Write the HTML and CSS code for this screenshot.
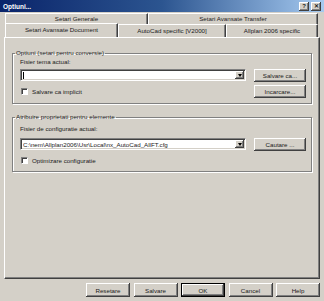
FILE: index.html
```html
<!DOCTYPE html>
<html lang="ro">
<head>
    <meta charset="UTF-8">
    <title>Optiuni...</title>
    <link rel="stylesheet" href="styles.css">
</head>
<body>
    <div class="dialog">
        <div class="titlebar">
            <span class="title">Optiuni...</span>
            <span class="tbtn">?</span>
            <span class="tbtn close">✕</span>
        </div>

        <div class="tabs">
            <div class="tabrow back">
                <div class="tab w143">Setari Generale</div>
                <div class="tab w170">Setari Avansate Transfer</div>
            </div>
            <div class="tabrow front">
                <div class="tab w113 active">Setari Avansate Document</div>
                <div class="tab w108">AutoCad specific [V2000]</div>
                <div class="tab w92">Allplan 2006 specific</div>
            </div>
        </div>

        <div class="panel">
            <fieldset class="group g1">
                <legend>Optiuni (setari pentru conversie)</legend>
                <div class="lbl">Fisier tema actual:</div>
                <div class="row">
                    <div class="combo"><span class="caret"></span><span class="drop"><i></i></span></div>
                    <button class="btn">Salvare ca...</button>
                </div>
                <div class="row r2">
                    <label class="check"><span class="box"></span>Salvare ca implicit</label>
                    <button class="btn">Incarcare...</button>
                </div>
            </fieldset>

            <fieldset class="group g2">
                <legend>Atribuire proprietati pentru elemente</legend>
                <div class="lbl">Fisier de configuratie actual:</div>
                <div class="row">
                    <div class="combo"><span class="val">C:\nem\Allplan2006\Usr\Local\nx_AutoCad_AllFT.cfg</span><span class="drop"><i></i></span></div>
                    <button class="btn">Cautare ...</button>
                </div>
                <div class="row r3">
                    <label class="check"><span class="box"></span>Optimizare configuratie</label>
                </div>
            </fieldset>
        </div>

        <div class="footer">
            <button class="btn fb">Resetare</button>
            <button class="btn fb">Salvare</button>
            <button class="btn fb def">OK</button>
            <button class="btn fb">Cancel</button>
            <button class="btn fb">Help</button>
        </div>
    </div>
</body>
</html>
```

FILE: styles.css
```css
* {
    box-sizing: border-box;
}

body {
    margin: 0;
    background: #d4d0c8;
    font-family: "Liberation Sans", Arial, sans-serif;
    font-size: 6.2px;
    color: #1a1a1a;
}

.dialog {
    width: 324px;
    height: 301px;
    background: #d4d0c8;
    display: flex;
    flex-direction: column;
}

/* title bar */
.titlebar {
    height: 12px;
    margin-bottom: 1px;
    background: linear-gradient(to right, #0a246a, #2c5590 50%, #a6caf0);
    display: flex;
    align-items: center;
    padding: 0 3px 0 3px;
    gap: 1px;
}

.title {
    flex: 1;
    color: #fff;
    font-weight: bold;
    font-size: 6.5px;
}

.tbtn {
    width: 10px;
    height: 9px;
    background: #d4d0c8;
    box-shadow: inset -1px -1px #404040, inset 1px 1px #fff, inset -2px -2px #808080;
    font-size: 6px;
    font-weight: bold;
    line-height: 9px;
    text-align: center;
}

.tbtn.close {
    margin-left: 1px;
}

/* tabs */
.tabs {
    padding: 0 6px 0 5px;
}

.tabrow {
    display: flex;
}

.tabrow.back {
    height: 11px;
}

.tabrow.front {
    height: 13px;
    position: relative;
    z-index: 1;
}

.tab {
    border-top: 1px solid #fff;
    border-left: 1px solid #fff;
    border-right: 1px solid #404040;
    box-shadow: inset -1px 0 #808080;
    text-align: center;
    line-height: 10px;
    white-space: nowrap;
}

.front .tab {
    line-height: 11px;
}

.tab.active {
    height: 14px;
    margin-top: -1px;
    background: #d4d0c8;
    line-height: 12px;
}

.w143 { width: 143px; }
.w170 { width: 170px; }
.w113 { width: 113px; }
.w108 { width: 108px; }
.w92 { width: 92px; }

/* panel */
.panel {
    margin: 0 4px;
    height: 242px;
    border-top: 1px solid #fff;
    border-left: 1px solid #fff;
    border-right: 1px solid #404040;
    border-bottom: 1px solid #404040;
    box-shadow: inset -1px -1px #808080;
    padding: 11px 7px 0 7px;
}

.group {
    margin: 0;
    border: 1px solid #808080;
    box-shadow: inset 1px 1px #fff, 1px 1px #fff;
    padding: 1px 5px 0 7px;
    min-width: 0;
}

.group legend {
    padding: 0 1px;
    margin-left: -5px;
    line-height: 8px;
}

.g1 {
    height: 55px;
}

.g2 {
    margin-top: 9px;
    height: 59px;
}

.lbl {
    height: 10px;
    line-height: 8px;
}

.g2 .lbl {
    margin-top: 3px;
    height: 12px;
}

.row {
    display: grid;
    grid-template-columns: 226px 52px;
    column-gap: 8px;
    align-items: center;
    height: 14px;
}

.row.r2 {
    margin-top: 2px;
}

.row.r3 {
    margin-top: 2px;
}

/* controls */
.combo {
    height: 12px;
    background: #fff;
    border: 1px solid;
    border-color: #808080 #fff #fff #808080;
    box-shadow: inset 1px 1px #404040, inset -1px -1px #d4d0c8;
    display: flex;
    align-items: center;
    padding: 1px 1px 1px 2px;
}

.caret {
    width: 1px;
    height: 7px;
    background: #000;
}

.val {
    flex: 1;
    white-space: nowrap;
    overflow: hidden;
}

.drop {
    margin-left: auto;
    width: 9px;
    height: 8px;
    background: #d4d0c8;
    box-shadow: inset -1px -1px #404040, inset 1px 1px #fff, inset -2px -2px #808080;
    display: flex;
    align-items: center;
    justify-content: center;
}

.drop i {
    width: 0;
    height: 0;
    border-left: 2.5px solid transparent;
    border-right: 2.5px solid transparent;
    border-top: 3px solid #000;
}

.btn {
    height: 13px;
    padding: 0;
    border: 0;
    background: #d4d0c8;
    box-shadow: inset -1px -1px #404040, inset 1px 1px #fff, inset -2px -2px #808080;
    font: inherit;
    color: #1a1a1a;
}

.check {
    display: flex;
    align-items: center;
    gap: 4px;
    padding-left: 1px;
}

.box {
    width: 7px;
    height: 7px;
    background: #fff;
    border: 1px solid;
    border-color: #808080 #fff #fff #808080;
    box-shadow: inset 1px 1px #404040;
}

/* footer */
.footer {
    display: flex;
    justify-content: flex-end;
    gap: 3.5px;
    padding: 4px 4px 0 0;
}

.fb {
    width: 44px;
    height: 14px;
}

.fb.def {
    border: 1px solid #000;
}
```
